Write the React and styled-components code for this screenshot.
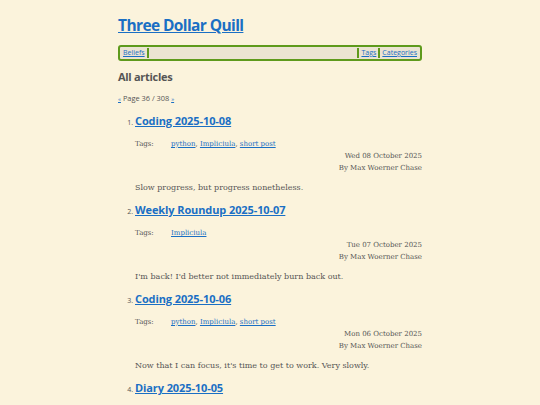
import React from "react";
import styled, { createGlobalStyle } from "styled-components";

const GlobalStyle = createGlobalStyle`
  html, body {
    margin: 0;
    padding: 0;
    background: #fbf3dc;
  }
  body {
    font-family: "DejaVu Serif", "Liberation Serif", serif;
    font-size: 8px;
    color: #555;
  }
  a {
    color: #1a6fc4;
  }
`;

const Page = styled.div`
  width: 304px;
  margin: 0 auto;
  padding-top: 15px;
`;

const Title = styled.h1`
  margin: 0;
  font-family: "Open Sans", "Noto Sans", sans-serif;
  font-size: 15.5px;
  letter-spacing: -0.6px;
  line-height: 21px;
  font-weight: 700;
  a {
    color: #1a6fc4;
  }
`;

const Nav = styled.nav`
  margin-top: 9px;
  display: flex;
  align-items: center;
  height: 12px;
  border: 2px solid #5e9a1c;
  border-radius: 3px;
  background: #ebe4d2;
  padding: 0 1px;
  font-family: "Open Sans", "Noto Sans", sans-serif;
  font-size: 7px;
`;

const NavLink = styled.a`
  padding: 0 2px;
  border-right: ${(p) => (p.$sepRight ? "2px solid #5e9a1c" : "none")};
  border-left: ${(p) => (p.$sepLeft ? "2px solid #5e9a1c" : "none")};
  line-height: 10px;
`;

const Spacer = styled.div`
  flex: 1;
`;

const Heading = styled.h2`
  margin: 8px 0 0;
  font-family: "Open Sans", "Noto Sans", sans-serif;
  font-size: 11px;
  letter-spacing: -0.3px;
  line-height: 16px;
  font-weight: 700;
  color: #555;
`;

const Pager = styled.p`
  margin: 8px 0 0;
  font-family: "Open Sans", "Noto Sans", sans-serif;
  font-size: 7.4px;
  line-height: 10px;
  a {
    font-size: 6px;
  }
`;

const List = styled.ol`
  margin: 9px 0 0;
  padding-left: 17px;
  font-family: "Open Sans", "Noto Sans", sans-serif;
  font-size: 7px;
  li::marker {
    color: #555;
  }
`;

const Item = styled.li`
  margin-bottom: 8px;
`;

const ItemTitle = styled.h3`
  margin: 0;
  font-size: 11px;
  letter-spacing: -0.1px;
  line-height: 16px;
  font-weight: 700;
  a {
    color: #1a6fc4;
  }
`;

const TagRow = styled.div`
  display: flex;
  margin-top: 9px;
  font-family: "DejaVu Serif", "Liberation Serif", serif;
  font-size: 7px;
  line-height: 12px;
`;

const TagLabel = styled.span`
  width: 36px;
`;

const Meta = styled.div`
  text-align: right;
  font-family: "DejaVu Serif", "Liberation Serif", serif;
  font-size: 7px;
  line-height: 12px;
`;

const Summary = styled.p`
  margin: 8px 0 0;
  font-family: "DejaVu Serif", "Liberation Serif", serif;
  font-size: 8px;
  line-height: 12px;
`;

const articles = [
  {
    title: "Coding 2025-10-08",
    tags: ["python", "Impliciula", "short post"],
    date: "Wed 08 October 2025",
    summary: "Slow progress, but progress nonetheless.",
  },
  {
    title: "Weekly Roundup 2025-10-07",
    tags: ["Impliciula"],
    date: "Tue 07 October 2025",
    summary: "I'm back! I'd better not immediately burn back out.",
  },
  {
    title: "Coding 2025-10-06",
    tags: ["python", "Impliciula", "short post"],
    date: "Mon 06 October 2025",
    summary: "Now that I can focus, it's time to get to work. Very slowly.",
  },
  {
    title: "Diary 2025-10-05",
    tags: ["Diary"],
    date: "Sun 05 October 2025",
    summary: "",
  },
];

function App() {
  return (
    <>
      <GlobalStyle />
      <Page>
        <Title>
          <a href="#">Three Dollar Quill</a>
        </Title>
        <Nav>
          <NavLink href="#" $sepRight>
            Beliefs
          </NavLink>
          <Spacer />
          <NavLink href="#" $sepLeft>
            Tags
          </NavLink>
          <NavLink href="#" $sepLeft>
            Categories
          </NavLink>
        </Nav>
        <Heading>All articles</Heading>
        <Pager>
          <a href="#">«</a> Page 36 / 308 <a href="#">»</a>
        </Pager>
        <List>
          {articles.map((a) => (
            <Item key={a.title}>
              <ItemTitle>
                <a href="#">{a.title}</a>
              </ItemTitle>
              <TagRow>
                <TagLabel>Tags:</TagLabel>
                <span>
                  {a.tags.map((t, i) => (
                    <React.Fragment key={t}>
                      <a href="#">{t}</a>
                      {i < a.tags.length - 1 ? ", " : ""}
                    </React.Fragment>
                  ))}
                </span>
              </TagRow>
              <Meta>{a.date}</Meta>
              <Meta>By Max Woerner Chase</Meta>
              <Summary>{a.summary}</Summary>
            </Item>
          ))}
        </List>
      </Page>
    </>
  );
}

export default App;
